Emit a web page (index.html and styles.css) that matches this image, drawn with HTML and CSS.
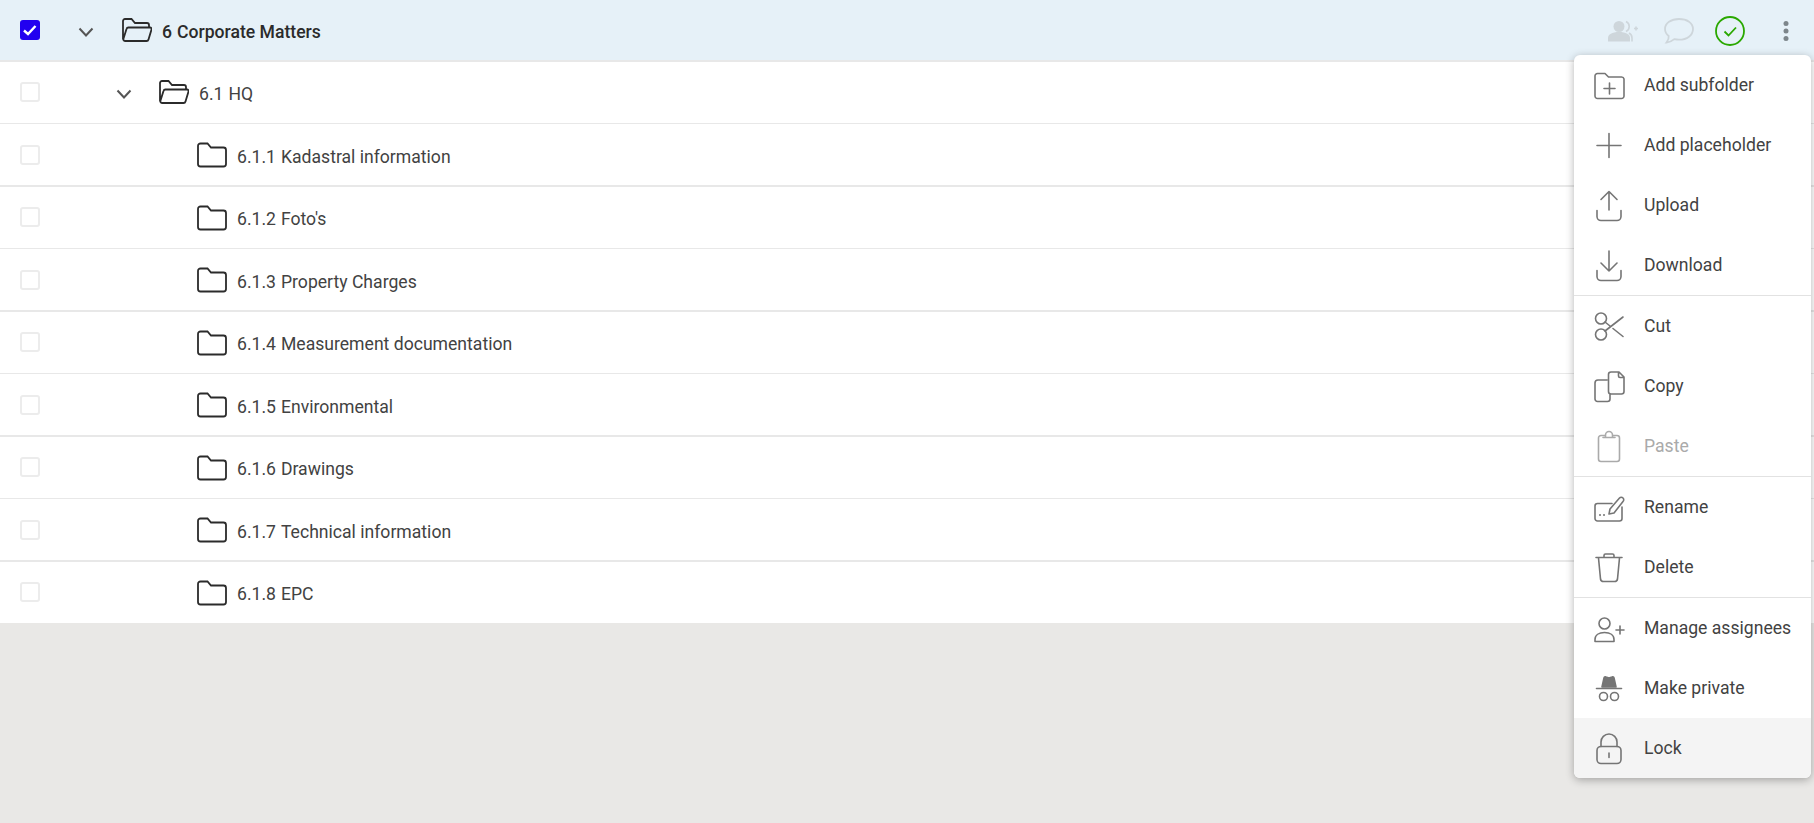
FILE: index.html
```html
<!DOCTYPE html>
<html lang="en">
<head>
  <meta charset="UTF-8" />
  <title>Corporate Matters</title>
  <link rel="stylesheet" href="styles.css">
</head>
<body>
  <!-- Folder tree -->
  <div class="tree">
    <div class="row row-selected">
      <span class="check check-on">
        <svg viewBox="0 0 20 20"><path d="M4 10.500l4 3.500 7.500-8"/></svg>
      </span>
      <svg class="chev chev-0" viewBox="0 0 16 10"><path d="M1.500 1.500L8 8.500l6.500-7"/></svg>
      <svg class="folder folder-top" viewBox="0 0 30 24"><path d="M1 21V3a2 2 0 0 1 2-2h6.500l3.500 4h12a2 2 0 0 1 2 2v2.500M1.200 21.500L4.500 11a2 2 0 0 1 2-1.500H28a1.500 1.500 0 0 1 1.500 2L26.500 21.500a2 2 0 0 1-2 1.500H3a2 2 0 0 1-1.800-1.500z"/></svg>
      <span class="name name-bold"><span class="num">6</span>Corporate Matters</span>
      <div class="actions">
        <svg class="act act-person" viewBox="0 0 30 22"><circle cx="11" cy="6.500" r="5.500"/><path d="M0 21.500v-3.500c0-3.500 4-6 11-6s11 2.500 11 6v3.500z"/><path class="thin" d="M18 1.500a5.500 5.500 0 0 1 0 10M21 13c2 1 3 3 3 5v3.500M26 8.500h4M28 6.500v4"/></svg>
        <svg class="act act-comment" viewBox="0 0 30 26"><path d="M15 1C7 1 1 5.200 1 11c0 2.800 1.400 5.200 3.700 7 .3 2-.7 4.500-2.200 6.500 3-.3 6-1.700 7.800-3.300 1.500.3 3.100.5 4.700.5 8 0 14-4.400 14-10.700S23 1 15 1z"/></svg>
        <svg class="act act-done" viewBox="0 0 30 30"><circle cx="15" cy="15" r="14"/><path d="M9.500 15.500l4 4 7.500-8"/></svg>
        <svg class="act act-more" viewBox="0 0 30 30"><circle cx="15" cy="7.500" r="2.500"/><circle cx="15" cy="15" r="2.500"/><circle cx="15" cy="22.500" r="2.500"/></svg>
      </div>
    </div>

    <div class="row">
      <span class="check"></span>
      <svg class="chev chev-1" viewBox="0 0 16 10"><path d="M1.500 1.500L8 8.500l6.500-7"/></svg>
      <svg class="folder" viewBox="0 0 30 24"><path d="M1 21V3a2 2 0 0 1 2-2h6.500l3.500 4h12a2 2 0 0 1 2 2v2.500M1.200 21.500L4.500 11a2 2 0 0 1 2-1.500H28a1.500 1.500 0 0 1 1.500 2L26.500 21.500a2 2 0 0 1-2 1.500H3a2 2 0 0 1-1.800-1.500z"/></svg>
      <span class="name"><span class="num">6.1</span>HQ</span>
    </div>

    <div class="row"><span class="check"></span><svg class="folder folder-sub" viewBox="0 0 30 26"><use href="#closed"/></svg><span class="name"><span class="num">6.1.1</span>Kadastral information</span></div>
    <div class="row"><span class="check"></span><svg class="folder folder-sub" viewBox="0 0 30 26"><use href="#closed"/></svg><span class="name"><span class="num">6.1.2</span>Foto's</span></div>
    <div class="row"><span class="check"></span><svg class="folder folder-sub" viewBox="0 0 30 26"><use href="#closed"/></svg><span class="name"><span class="num">6.1.3</span>Property Charges</span></div>
    <div class="row"><span class="check"></span><svg class="folder folder-sub" viewBox="0 0 30 26"><use href="#closed"/></svg><span class="name"><span class="num">6.1.4</span>Measurement documentation</span></div>
    <div class="row"><span class="check"></span><svg class="folder folder-sub" viewBox="0 0 30 26"><use href="#closed"/></svg><span class="name"><span class="num">6.1.5</span>Environmental</span></div>
    <div class="row"><span class="check"></span><svg class="folder folder-sub" viewBox="0 0 30 26"><use href="#closed"/></svg><span class="name"><span class="num">6.1.6</span>Drawings</span></div>
    <div class="row"><span class="check"></span><svg class="folder folder-sub" viewBox="0 0 30 26"><use href="#closed"/></svg><span class="name"><span class="num">6.1.7</span>Technical information</span></div>
    <div class="row"><span class="check"></span><svg class="folder folder-sub" viewBox="0 0 30 26"><use href="#closed"/></svg><span class="name"><span class="num">6.1.8</span>EPC</span></div>
  </div>

  <!-- Context menu -->
  <div class="menu">
    <div class="menu-group">
      <div class="menu-item"><svg class="ico" viewBox="0 0 30 30"><path d="M1 6a2.500 2.500 0 0 1 2.500-2.500h7.500l3.500 3.500h13A2.500 2.500 0 0 1 30 9v17a2.500 2.500 0 0 1-2.500 2.500h-24A2.500 2.500 0 0 1 1 26zM15.500 13v11M10 18.500h11"/></svg>Add subfolder</div>
      <div class="menu-item"><svg class="ico" viewBox="0 0 30 30"><path d="M15 3.500v24M3 15.500h24"/></svg>Add placeholder</div>
      <div class="menu-item"><svg class="ico" viewBox="0 0 30 30"><path d="M15 1.500V20M7 9.500l8-8 8 8M3 20.500v6a4 4 0 0 0 4 4h16a4 4 0 0 0 4-4v-6"/></svg>Upload</div>
      <div class="menu-item"><svg class="ico" viewBox="0 0 30 30"><path d="M15 1v20M7 13l8 8 8-8M3 20.500v6a4 4 0 0 0 4 4h16a4 4 0 0 0 4-4v-6"/></svg>Download</div>
    </div>
    <div class="menu-group">
      <div class="menu-item"><svg class="ico" viewBox="0 0 30 30"><circle cx="7" cy="7.500" r="5.500"/><circle cx="7" cy="23.500" r="5.500"/><path d="M11 11l5 4M19 17.500l10 8M11 20l18-14"/></svg>Cut</div>
      <div class="menu-item"><svg class="ico" viewBox="0 0 30 30"><path d="M17 1h8l5 5v14.500a2.500 2.500 0 0 1-2.500 2.500h-10.500a2.500 2.500 0 0 1-2.500-2.500v-17A2.500 2.500 0 0 1 17 1zM24.500 1v4a1.500 1.500 0 0 0 1.500 1.500h4M13 9H4a3 3 0 0 0-3 3v16a2.500 2.500 0 0 0 2.500 2.500h10a2.500 2.500 0 0 0 2.500-2.500v-4.500"/></svg>Copy</div>
      <div class="menu-item menu-item-off"><svg class="ico" viewBox="0 0 30 30"><path d="M11 4.500H7A2.500 2.500 0 0 0 4.500 7v21A2.500 2.500 0 0 0 7 30.500h16a2.500 2.500 0 0 0 2.500-2.500V7A2.500 2.500 0 0 0 23 4.500h-4M9 6.500h12M11.500 6V4a3.500 3.500 0 0 1 7 0v2"/></svg>Paste</div>
    </div>
    <div class="menu-group">
      <div class="menu-item"><svg class="ico" viewBox="0 0 30 30"><path d="M18 11.500H3.500A2.500 2.500 0 0 0 1 14v12.500A2.500 2.500 0 0 0 3.500 29h22a2.500 2.500 0 0 0 2.500-2.500V15M15 22l1-5L25.500 6a2.200 2.200 0 0 1 3.500 3.500L20 21z"/><path class="dots" d="M6 23h.01M10 23h.01"/></svg>Rename</div>
      <div class="menu-item"><svg class="ico" viewBox="0 0 30 30"><path d="M2 5.500h26M10 5V3.500A1.500 1.500 0 0 1 11.500 2h7A1.500 1.500 0 0 1 20 3.500V5M4.500 6l2 21a3 3 0 0 0 3 2.500h11a3 3 0 0 0 3-2.500l2-21"/></svg>Delete</div>
    </div>
    <div class="menu-group">
      <div class="menu-item"><svg class="ico" viewBox="0 0 30 30"><circle cx="10.500" cy="10.500" r="5.500"/><path d="M1 28.500v-2c0-4.500 4-7 9.500-7s9.500 2.500 9.500 7v2zM26 13v8M22 17h8"/></svg>Manage assignees</div>
      <div class="menu-item"><svg class="ico" viewBox="0 0 30 30"><path class="hat" d="M8 14l2-9c.3-1 1-1.500 2-1l3 1 3-1c1-.5 1.700 0 2 1l2 9z"/><path d="M2.500 15.500h25"/><circle cx="9.500" cy="23.500" r="4"/><circle cx="20.500" cy="23.500" r="4"/></svg>Make private</div>
      <div class="menu-item menu-item-hover"><svg class="ico" viewBox="0 0 30 30"><rect x="3" y="13.500" width="24" height="17" rx="4"/><path d="M7 13.500V9a8 8 0 0 1 16 0v4.500M15 20v4.500"/></svg>Lock</div>
    </div>
  </div>

  <!-- shared closed folder outline -->
  <svg class="defs" width="0" height="0">
    <symbol id="closed" viewBox="0 0 30 26">
      <path d="M1 4a2.500 2.500 0 0 1 2.500-2.500h7l3.500 4h12.500A2.500 2.500 0 0 1 29 8v14a2.500 2.500 0 0 1-2.500 2.500h-23A2.500 2.500 0 0 1 1 22z"/>
    </symbol>
  </svg>
</body>
</html>
```
FILE: styles.css
```css
:root {
  --bg: #e9e8e6;
  --line: #e8e8e8;
  --text: #424242;
  --icon: #757575;
}
*, *::before, *::after { box-sizing: border-box; }
html, body { height: 100%; margin: 0; overflow: hidden; }
body {
  position: relative;
  background: var(--bg);
  color: var(--text);
  font-family: Roboto, "Liberation Sans", sans-serif;
  font-size: 17.6px;
}

/* ── Tree rows ─────────────────────────────── */
.tree { background: #fff; }

.row {
  display: flex;
  align-items: center;
  height: 62.5px;
  padding-left: 20px;
  border-bottom: 1px solid var(--line);
}
/* every other divider reads one pixel heavier */
.row:nth-child(odd) { box-shadow: 0 1px 0 var(--line); }
.row:last-child { height: 62px; border-bottom: 0; box-shadow: none; }
.row-selected { height: 61.25px; background: #e6f1f8; }

.check {
  flex: none;
  width: 20px;
  height: 20px;
  border: 2px solid #ececec;
  border-radius: 3px;
}
.check-on {
  background: #2200f0;
  border: 0;
}
.check-on svg { display: block; fill: none; stroke: #fff; stroke-width: 2.4; }

.chev { flex: none; width: 16px; height: 10px; margin-top: 3px; fill: none; stroke: #555; stroke-width: 2; }
.chev-0 { margin-left: 38px; }
.chev-1 { margin-left: 76px; }

.folder {
  flex: none;
  width: 30px;
  height: 24px;
  margin-left: 27px;
  fill: none;
  stroke: #2b2b2b;
  stroke-width: 1.8;
}
.folder-top { margin-left: 28px; }
.folder-sub { height: 26px; margin-top: 1px; margin-left: 157px; }

.name { margin-top: 4px; margin-left: 10px; white-space: nowrap; }
.name-bold { font-weight: 500; color: #2b2b2b; }
.num { margin-right: 5px; }

/* ── Header actions ────────────────────────── */
.actions {
  display: flex;
  align-items: center;
  gap: 26px;
  margin-left: auto;
  margin-top: 2px;
  padding-right: 13px;
}
.act { flex: none; width: 30px; height: 30px; }
.act-person { fill: #ced6db; height: 22px; }
.act-person .thin { fill: none; stroke: #ced6db; stroke-width: 1.6; }
.act-comment { height: 26px; fill: none; stroke: #ced6db; stroke-width: 1.8; }
.act-done { margin-left: -5px; fill: none; stroke: #2aa800; stroke-width: 1.8; }
.act-more { fill: #7d868b; }

/* ── Context menu ──────────────────────────── */
.menu {
  position: absolute;
  top: 55px;
  left: 1574px;
  width: 237px;
  background: #fff;
  border-radius: 6px;
  overflow: hidden;
  box-shadow: 0 2px 8px rgba(0, 0, 0, .3);
}
.menu-group + .menu-group { border-top: 1px solid #e2e2e2; }

.menu-item {
  display: flex;
  align-items: center;
  gap: 20px;
  height: 60px;
  padding-left: 20px;
  white-space: nowrap;
}
.menu-item-off { color: #aaa; }
.menu-item-off .ico { stroke: #aaa; }
.menu-item-hover { background: #f4f4f4; }

.ico {
  flex: none;
  width: 30px;
  height: 30px;
  overflow: visible;
  fill: none;
  stroke: var(--icon);
  stroke-width: 1.6;
  stroke-linecap: round;
  stroke-linejoin: round;
}
.ico .hat { fill: var(--icon); }
.ico .dots { stroke-width: 2; }

.defs { position: absolute; }
```
